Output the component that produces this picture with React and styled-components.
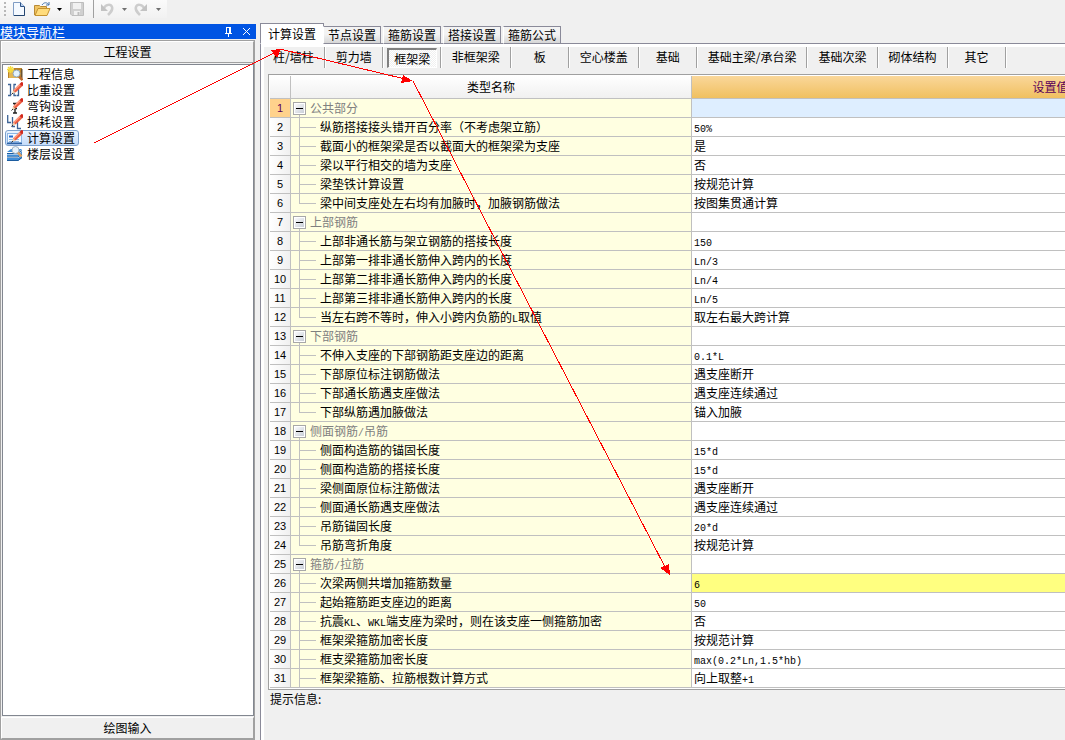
import React from "react";
import styled, { createGlobalStyle, css } from "styled-components";

const Global = createGlobalStyle`
  *, *::before, *::after { box-sizing: border-box; }
  html, body { margin: 0; background: #f0f0f0; }
  body {
    overflow: hidden;
    font: 12px/16px "Noto Sans CJK SC", sans-serif;
    color: #000;
  }
  button { font: inherit; color: inherit; border: 0; padding: 0; margin: 0; background: none; white-space: nowrap; }
  svg { display: block; flex: none; }
  ul { list-style: none; margin: 0; padding: 0; }
`;

const Page = styled.div`
  position: relative;
  display: flex;
  flex-direction: column;
  min-height: 100vh;
`;

const Toolbar = styled.div`
  display: flex;
  align-items: center;
  align-self: flex-start;
  height: 18px;
  margin-bottom: 5px;
  padding: 0 0 0 4px;
  background: linear-gradient(#fbfbfb, #f2f2f2);
`;

const ToolButton = styled.button`
  display: flex;
  justify-content: center;
  width: ${(p) => p.$w}px;
`;

const ToolDivider = styled.span`
  width: 1px;
  height: 18px;
  margin: 0 5px 0 3px;
  background: #a0a0a0;
`;

const Workspace = styled.div`
  display: flex;
  flex: 1;
  min-width: 0;
`;

const Sidebar = styled.aside`
  display: flex;
  flex-direction: column;
  flex: none;
  width: 256px;
  margin-right: 4px;
  padding-top: 1px;
`;

const SidebarTitle = styled.div`
  display: flex;
  align-items: center;
  height: 15px;
  padding-right: 5px;
  background: #0054e3;
  color: #fff;
  font-size: 13px;
  line-height: 14px;
`;

const TitleText = styled.span`
  flex: 1;
`;

const TitleButton = styled.button`
  display: flex;
  margin-left: 9px;
`;

const SidebarBody = styled.div`
  display: flex;
  flex-direction: column;
  flex: 1;
  margin: 1px 1px 0 0;
  border: 1px solid #a0a0a0;
`;

const SectionButton = styled.button`
  height: 22px;
  border: 1px solid #fff;
  border-right-color: #a0a0a0;
  border-bottom-color: #a0a0a0;
  background: #f0f0f0;
`;

const NavList = styled.ul`
  flex: 1;
  margin: 1px 0 1px 1px;
  padding: 1px 2px;
  border: 1px solid #828790;
  background: #fff;
`;

const NavItem = styled.button`
  display: flex;
  align-items: center;
  gap: 4px;
  height: 16px;
  padding: 0 3px 0 1px;
  border: 1px solid transparent;
  border-radius: 3px;
  line-height: 14px;
  ${(p) =>
    p.$active &&
    css`
      border-color: #7da2ce;
      background: linear-gradient(#eaf3fe, #c5dcfa);
    `}
`;

const Main = styled.main`
  display: flex;
  flex-direction: column;
  flex: 1;
  min-width: 0;
`;

const Tabs = styled.div`
  display: flex;
  align-items: flex-end;
  height: 21px;
  box-shadow: inset 0 -1px #8a8a99;
`;

const Tab = styled.button`
  width: ${(p) => (p.$active ? 64 : 58)}px;
  height: ${(p) => (p.$active ? 21 : 18)}px;
  margin-right: ${(p) => (p.$active ? -1 : 2)}px;
  border: 1px solid #8a8a99;
  border-left-color: ${(p) => (p.$active ? "#8a8a99" : "#fff")};
  border-bottom-color: ${(p) => (p.$active ? "#fff" : "#8a8a99")};
  background: ${(p) => (p.$active ? "#fff" : "linear-gradient(#f3f3f3 45%, #d6d6d6)")};
  line-height: 16px;
`;

const TabPanel = styled.div`
  display: flex;
  flex-direction: column;
  flex: 1;
  border-left: 1px solid #8a8a99;
  box-shadow: inset 3px 3px #fff;
`;

const Categories = styled.ul`
  display: flex;
  height: 30px;
  padding: 3px 0 0 1px;
`;

const Category = styled.li`
  display: flex;
  flex: none;
  min-width: 58px;
  height: 21px;
  padding: 0 3px 0 4px;
  border-right: 1px solid #a0a0a0;
  box-shadow: 1px 0 #fff;
`;

const CategoryButton = styled.button`
  flex: 1;
  padding: 0 6px 2px;
  border: 1px solid transparent;
  ${(p) =>
    p.$active &&
    css`
      padding: 0 5px;
      margin-top: 1px;
      border: 1px solid #fff;
      border-top: 2px solid #808080;
      border-left: 2px solid #808080;
      background: repeating-conic-gradient(#fff 0 25%, #f0f0f0 0 50%) 0 0 / 2px 2px;
      line-height: 14px;
    `}
`;

const GridFrame = styled.div`
  margin-left: 7px;
  padding: 1px 0 1px 1px;
  overflow: hidden;
  border: 1px solid #a0a0a0;
  border-right: 0;
  background: #fff;
`;

const Grid = styled.table`
  width: 1140px;
  table-layout: fixed;
  border-collapse: separate;
  border-spacing: 0;
`;

const NumberCol = styled.col`
  width: 21px;
`;
const NameCol = styled.col`
  width: 401px;
`;

const HeadCell = styled.th`
  height: 23px;
  padding: 0;
  border-right: 1px solid #c0c0c0;
  border-bottom: 1px solid #c0c0c0;
  font-weight: normal;
  color: ${(p) => (p.$active ? "#5a005a" : "#000")};
  background: ${(p) =>
    p.$active ? "linear-gradient(#fad79a, #f0c060)" : "linear-gradient(#fff, #f0f0f0)"};
`;

const cell = css`
  height: 19px;
  padding: 0;
  border-right: 1px solid #c0c0c0;
  border-bottom: 1px solid #c0c0c0;
  line-height: 18px;
  white-space: nowrap;
`;

const NumberCell = styled.th`
  ${cell}
  font-family: "Liberation Sans", sans-serif;
  font-size: 11px;
  font-weight: normal;
  color: ${(p) => (p.$active ? "#5a005a" : "#000")};
  background: ${(p) => (p.$active ? "#ffd28c" : "linear-gradient(90deg, #fff, #f0f0f0)")};
`;

const NameCell = styled.td`
  ${cell}
  background: #ffffe1;
`;

const NameLine = styled.div`
  display: flex;
  align-items: center;
  height: 18px;
  gap: 4px;
  padding-left: ${(p) => (p.$group ? 2 : 8)}px;
  color: ${(p) => (p.$group ? "#808080" : "#000")};
`;

const line = "linear-gradient(#c0c0c0, #c0c0c0)";

const Branch = styled.span`
  width: 17px;
  height: 18px;
  background: ${line} 0 0 / 1px ${(p) => (p.$last ? "9px" : "18px")} no-repeat,
    ${line} 0 9px / 17px 1px no-repeat;
`;

const ExpanderSlot = styled.span`
  display: flex;
  align-items: center;
  height: 18px;
  background: ${line} 6px 9px / 1px 9px no-repeat;
`;

const Expander = styled.button`
  display: flex;
  align-items: center;
  justify-content: center;
  width: 13px;
  height: 13px;
  border: 1px solid #a8a8a8;
  background: linear-gradient(135deg, #fff, #c4cad4);
  box-shadow: inset 0 0 0 1px #fff;
`;

const ValueCell = styled.td`
  ${cell}
  padding-left: 2px;
  background: ${(p) => p.$fill || "#fff"};
`;

const Latin = styled.span`
  font-family: "Liberation Mono", monospace;
  font-size: 10px;
  line-height: 10px;
`;

const Hint = styled.p`
  margin: 1px 0 0 9px;
`;

const Arrows = styled.svg`
  position: absolute;
  top: 0;
  left: 0;
  pointer-events: none;
`;

const groups = [
  ["公共部分", [
    ["纵筋搭接接头错开百分率（不考虑架立筋）", "50%"],
    ["截面小的框架梁是否以截面大的框架梁为支座", "是"],
    ["梁以平行相交的墙为支座", "否"],
    ["梁垫铁计算设置", "按规范计算"],
    ["梁中间支座处左右均有加腋时，加腋钢筋做法", "按图集贯通计算"],
  ]],
  ["上部钢筋", [
    ["上部非通长筋与架立钢筋的搭接长度", "150"],
    ["上部第一排非通长筋伸入跨内的长度", "Ln/3"],
    ["上部第二排非通长筋伸入跨内的长度", "Ln/4"],
    ["上部第三排非通长筋伸入跨内的长度", "Ln/5"],
    ["当左右跨不等时，伸入小跨内负筋的L取值", "取左右最大跨计算"],
  ]],
  ["下部钢筋", [
    ["不伸入支座的下部钢筋距支座边的距离", "0.1*L"],
    ["下部原位标注钢筋做法", "遇支座断开"],
    ["下部通长筋遇支座做法", "遇支座连续通过"],
    ["下部纵筋遇加腋做法", "锚入加腋"],
  ]],
  ["侧面钢筋/吊筋", [
    ["侧面构造筋的锚固长度", "15*d"],
    ["侧面构造筋的搭接长度", "15*d"],
    ["梁侧面原位标注筋做法", "遇支座断开"],
    ["侧面通长筋遇支座做法", "遇支座连续通过"],
    ["吊筋锚固长度", "20*d"],
    ["吊筋弯折角度", "按规范计算"],
  ]],
  ["箍筋/拉筋", [
    ["次梁两侧共增加箍筋数量", "6"],
    ["起始箍筋距支座边的距离", "50"],
    ["抗震KL、WKL端支座为梁时，则在该支座一侧箍筋加密", "否"],
    ["框架梁箍筋加密长度", "按规范计算"],
    ["框支梁箍筋加密长度", "max(0.2*Ln,1.5*hb)"],
    ["框架梁箍筋、拉筋根数计算方式", "向上取整+1"],
  ], true],
];

const rows = groups.flatMap(([title, items, continues]) => [
  { group: true, name: title, value: "" },
  ...items.map(([name, value], i) => ({
    name,
    value,
    last: !continues && i === items.length - 1,
  })),
]);

const fills = { 1: "#deeeff", 26: "#ffff80" };

/* Latin runs use a half-width face so that two letters fill one Chinese cell. */
const MixedText = ({ children }) => (
  <span>
    {children.split(/([\x20-\x7e]+)/).map((part, i) =>
      i % 2 ? <Latin key={i}>{part}</Latin> : part
    )}
  </span>
);

const tabs = ["计算设置", "节点设置", "箍筋设置", "搭接设置", "箍筋公式"];
const categories = [
  "柱/墙柱", "剪力墙", "框架梁", "非框架梁", "板", "空心楼盖",
  "基础", "基础主梁/承台梁", "基础次梁", "砌体结构", "其它",
];

const Pencil = () => (
  <g>
    <path d="M6 8.500 12.500 2 15 4.500 8.500 10.500z" fill="#ee5a3c" />
    <path d="m7 8.500 6-6" stroke="#ff9d82" strokeWidth="1.500" />
    <path d="M12.500 2 14.500 0 16 .5V3.500L15 4.500z" fill="#d3281c" />
    <path d="M6 8.500 5 12l3.500-1.500z" fill="#f0cfa8" />
    <path d="m4.500 12.500 1.500-1.500" stroke="#333" />
  </g>
);

const navItems = [
  ["工程信息", (
    <g>
      <path d="M1 3h5l1-1h8v10H1z" fill="#b98327" />
      <path d="M2 4h11v8H2z" fill="#e3b653" />
      <path d="M14 3h1.500v9H14z" fill="#6b5330" />
      <path d="M3.500 0v7M0 3.500h7M1 1l5 5M6 1 1 6" stroke="#f5dc3c" strokeWidth="1.400" />
      <circle cx="9.500" cy="7.500" r="3.500" fill="#e4f3fd" stroke="#8fa6bb" />
      <path d="m12 10.500 3.500 3.500" stroke="#b86a2c" strokeWidth="2.500" />
    </g>
  )],
  ["比重设置", (
    <g>
      <path d="M1 2.500h2.500v11H1M9 2.500H7v11h2M10.500 6.500h1v7H9.500" fill="none" stroke="#3e6496" strokeWidth="1.300" />
      <Pencil />
    </g>
  )],
  ["弯钩设置", (
    <g>
      <path d="M6 5.500h4M8 5v10M6 10.500h4M6 15h4" stroke="#222" strokeWidth="1.400" fill="none" />
      <Pencil />
    </g>
  )],
  ["损耗设置", (
    <g>
      <path d="M.7 1v7.500H4M5.500 3v9.500H8M10.500 6v8.500H14" fill="none" stroke="#3e6496" strokeWidth="1.300" />
      <Pencil />
    </g>
  )],
  ["计算设置", (
    <g>
      <rect x=".5" y="3.500" width="14" height="9" fill="#f2f9ff" stroke="#8db6e4" />
      <path d="M0 13.500h15" stroke="#2f63a5" strokeWidth="1.500" />
      <path d="M2 6.500h4" stroke="#246bce" strokeWidth="2" />
      <path d="M2 9.500h10M2 11.500h10" stroke="#8fb9e6" />
      <Pencil />
    </g>
  )],
  ["楼层设置", (
    <g>
      <path d="M0 6 4 3h11l-3 3zM0 8.500h11l4-3v2l-4 3H0zM0 12h11l4-3v3l-4 3H0z" fill="#3f8fd9" />
      <path d="M0 7.500h11l4-3M0 11h11l4-3M0 14.500h11l4-3" fill="none" stroke="#1c5c9f" />
      <circle cx="8.500" cy="4" r="3.500" fill="#e8f4fc" stroke="#a5b5c2" />
      <path d="m11 6.500 3.500 4" stroke="#e0a264" strokeWidth="2.500" />
    </g>
  )],
];

const Caret = ({ color }) => (
  <svg width="5" height="3" aria-hidden="true"><path d="M0 0h5L2.500 3z" fill={color} /></svg>
);

const Undo = ({ flip }) => (
  <svg width="14" height="14" viewBox="0 0 14 14" aria-hidden="true">
    <g transform={flip ? "translate(14 0) scale(-1 1)" : undefined}>
      <path d="M4 6c2-4 7-4 8-1 1 3-1 5-4 8" fill="none" stroke="#cdcdcd" strokeWidth="2.500" />
      <path d="M1 2v7h7z" fill="#c3c3c3" />
    </g>
  </svg>
);

export default function App() {
  return (
    <>
      <Global />
      <Page>
        <Toolbar>
          <svg width="3" height="16" aria-hidden="true">
            <path d="M1 1v15" stroke="#b8b8b8" strokeWidth="2" strokeDasharray="2 2" />
          </svg>
          <ToolButton $w={23} aria-label="新建">
            <svg width="12" height="14" viewBox="0 0 12 14">
              <path d="M.5.5h7l4 4v9H.5z" fill="#f4f9ff" stroke="#7f9cc4" />
              <path d="M7.500.5v4h4" fill="#b9d0ee" stroke="#2e5386" />
              <path d="M11.500 5v8.500H1" fill="none" stroke="#24456f" />
            </svg>
          </ToolButton>
          <ToolButton $w={24} aria-label="打开">
            <svg width="17" height="14" viewBox="0 0 17 14">
              <path d="M.5 13V3.500h5l1 1h6V7" fill="#f0c463" stroke="#b98a35" />
              <path d="m1 13.500 3-7h12l-3 7z" fill="#ffdc7c" stroke="#c4922f" />
              <path d="M8 3c2-3 5-3 7 0m0-3v3h-3" fill="none" stroke="#4675ad" />
            </svg>
          </ToolButton>
          <ToolButton $w={10} aria-label="打开选项"><Caret color="#000" /></ToolButton>
          <ToolButton $w={26} aria-label="保存">
            <svg width="14" height="14" viewBox="0 0 14 14">
              <path d="M.5.5h13v13H2l-1.500-1.500z" fill="#d0d0d0" stroke="#bdbdbd" />
              <path d="M3 1h8v6H3zM4 9h6v4H4z" fill="#f1f1f1" />
              <path d="M8.500 10v3" stroke="#bdbdbd" strokeWidth="2" />
            </svg>
          </ToolButton>
          <ToolDivider />
          <ToolButton $w={16} aria-label="撤销"><Undo /></ToolButton>
          <ToolButton $w={18} aria-label="撤销选项"><Caret color="#707070" /></ToolButton>
          <ToolButton $w={16} aria-label="恢复"><Undo flip /></ToolButton>
          <ToolButton $w={18} aria-label="恢复选项"><Caret color="#707070" /></ToolButton>
        </Toolbar>

        <Workspace>
          <Sidebar>
            <SidebarTitle>
              <TitleText>模块导航栏</TitleText>
              <TitleButton aria-label="固定">
                <svg width="9" height="10" viewBox="0 0 9 10">
                  <path d="M2 .5h5M2.500 0v6M5.500 0v6M6.500 0v6M1 6.500h7M4.500 7v3" stroke="#fff" />
                </svg>
              </TitleButton>
              <TitleButton aria-label="关闭">
                <svg width="9" height="9" viewBox="0 0 9 9">
                  <path d="m1 1 7 7M8 1 1 8" stroke="#fff" />
                </svg>
              </TitleButton>
            </SidebarTitle>
            <SidebarBody>
              <SectionButton>工程设置</SectionButton>
              <NavList>
                {navItems.map(([label, icon]) => (
                  <li key={label}>
                    <NavItem $active={label === "计算设置"}>
                      <svg width="16" height="16" viewBox="0 0 16 16" aria-hidden="true">{icon}</svg>
                      {label}
                    </NavItem>
                  </li>
                ))}
              </NavList>
              <SectionButton>绘图输入</SectionButton>
            </SidebarBody>
          </Sidebar>

          <Main>
            <Tabs role="tablist">
              {tabs.map((t, i) => (
                <Tab key={t} role="tab" aria-selected={i === 0} $active={i === 0}>{t}</Tab>
              ))}
            </Tabs>
            <TabPanel>
              <Categories>
                {categories.map((c) => (
                  <Category key={c}>
                    <CategoryButton $active={c === "框架梁"}>{c}</CategoryButton>
                  </Category>
                ))}
              </Categories>
              <GridFrame>
                <Grid>
                  <colgroup>
                    <NumberCol />
                    <NameCol />
                    <col />
                  </colgroup>
                  <thead>
                    <tr>
                      <HeadCell />
                      <HeadCell>类型名称</HeadCell>
                      <HeadCell $active>设置值</HeadCell>
                    </tr>
                  </thead>
                  <tbody>
                    {rows.map((r, i) => (
                      <tr key={i}>
                        <NumberCell scope="row" $active={i === 0}>{i + 1}</NumberCell>
                        <NameCell>
                          <NameLine $group={r.group}>
                            {r.group ? (
                              <ExpanderSlot>
                                <Expander aria-label={"折叠" + r.name}>
                                  <svg width="7" height="1"><path d="M0 .5h7" stroke="#000" /></svg>
                                </Expander>
                              </ExpanderSlot>
                            ) : (
                              <Branch $last={r.last} />
                            )}
                            <MixedText>{r.name}</MixedText>
                          </NameLine>
                        </NameCell>
                        <ValueCell $fill={fills[i + 1]}><MixedText>{r.value}</MixedText></ValueCell>
                      </tr>
                    ))}
                  </tbody>
                </Grid>
              </GridFrame>
              <Hint>提示信息:</Hint>
            </TabPanel>
          </Main>
        </Workspace>

        <Arrows width="700" height="600" shapeRendering="crispEdges" aria-hidden="true">
          <path d="M94 143 276 52M280 49 405 79M413 81 665 567" fill="none" stroke="#f00" />
          <path d="M281 49 271 50 277 58zM413 81 403 75 401 83zM670 575 660 568 669 564z" fill="#f00" />
        </Arrows>
      </Page>
    </>
  );
}
